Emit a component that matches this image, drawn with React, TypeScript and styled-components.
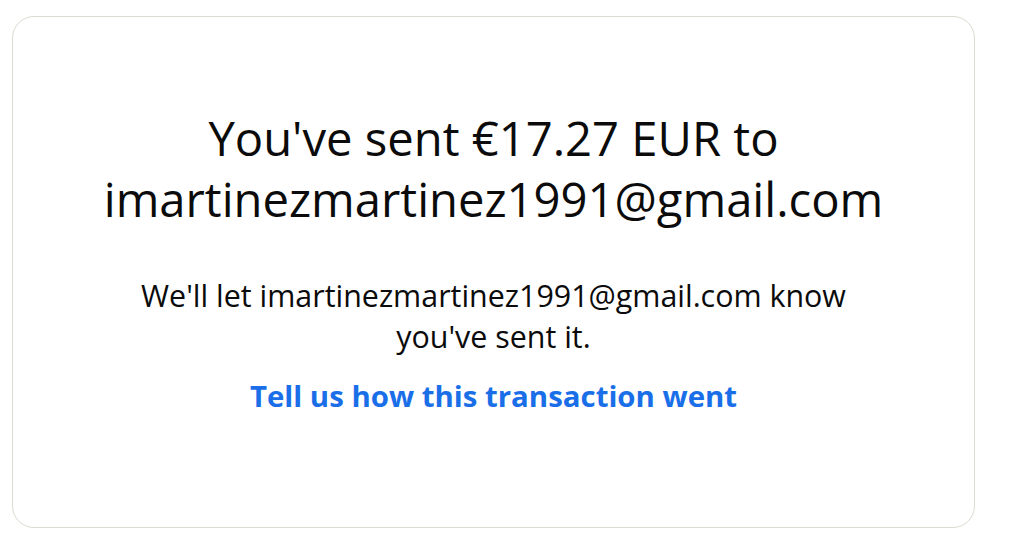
import React from 'react'
import styled, { createGlobalStyle } from 'styled-components';

const GlobalStyle = createGlobalStyle`
  body {
    margin: 0;
    background: #ffffff;
    font-family: "Open Sans", "Noto Sans", sans-serif;
  }
`

const App = () => {
  return (
    <Page>
      <GlobalStyle />
      <Card>
        <Title>
          You've sent €17.27 EUR to
          <br />
          imartinezmartinez1991@gmail.com
        </Title>
        <Message>
          We'll let imartinezmartinez1991@gmail.com know
          <br />
          you've sent it.
        </Message>
        <FeedbackLink href="#">Tell us how this transaction went</FeedbackLink>
      </Card>
    </Page>
  )
}

export default App

const Page = styled.div`
  padding: 16px 50px 28px 12px;
`

const Card = styled.div`
  box-sizing: border-box;
  width: 963px;
  height: 512px;
  padding-bottom: 20px;
  border: 1px solid #dcdbd0;
  border-radius: 22px;
  display: flex;
  flex-direction: column;
  align-items: center;
  justify-content: center;
  text-align: center;
  color: #0b0b0b;
`

const Title = styled.h1`
  margin: 0;
  font-size: 47.2px;
  line-height: 61px;
  font-weight: 400;
`

const Message = styled.p`
  margin: 45px 0 0;
  font-size: 30.4px;
  line-height: 41px;
`

const FeedbackLink = styled.a`
  margin-top: 19px;
  font-size: 29.4px;
  line-height: 40px;
  font-weight: 700;
  color: #1a6fe8;
  text-decoration: none;
`
